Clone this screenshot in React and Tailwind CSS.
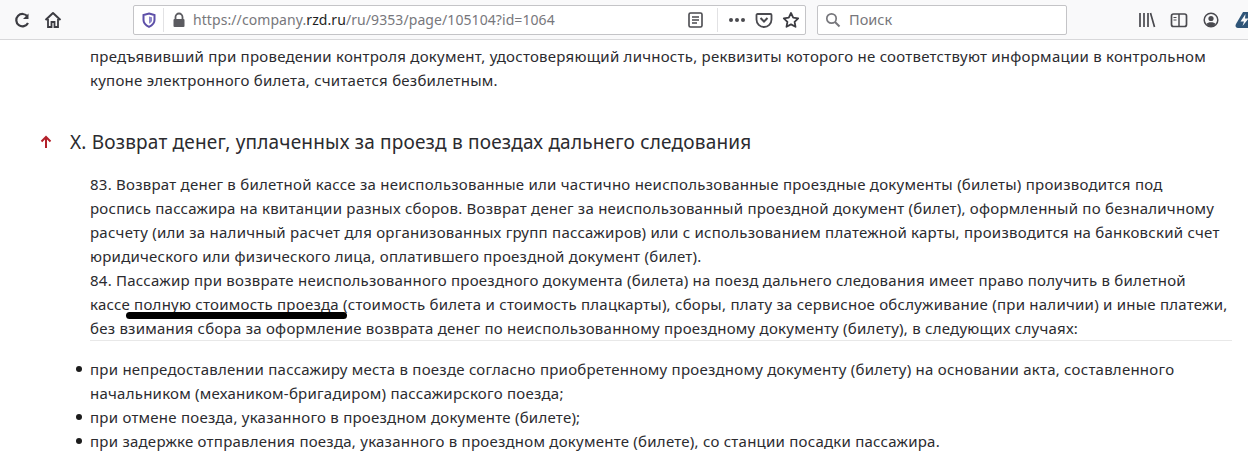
import React from "react";

const font = { fontFamily: '"Noto Sans", "Open Sans", sans-serif' };

function Line({ children }) {
  return <span className="block whitespace-nowrap">{children}</span>;
}

function Icon({ className, children, w = 18, h = 18 }) {
  return (
    <svg width={w} height={h} viewBox={`0 0 ${w} ${h}`} fill="none" className={className}>
      {children}
    </svg>
  );
}

function Toolbar() {
  return (
    <div className="h-10 shrink-0 bg-[#f9f9fa] border-b border-[#d8d8da] flex items-center overflow-hidden">
      <div className="w-[133px] shrink-0 flex items-center pl-[13px] gap-[13px]">
        <Icon>
          <path d="M14.500 5.500A6.200 6.200 0 1 0 15 12" stroke="#3c3c42" strokeWidth="2.200" />
          <path d="M15.500 2.500v5.500h-5.500z" fill="#3c3c42" />
        </Icon>
        <Icon>
          <path d="M1.500 9 9 2l7.500 7" stroke="#3c3c42" strokeWidth="2" strokeLinejoin="round" />
          <path d="M4 8v8h3.500v-5h3v5H14V8" stroke="#3c3c42" strokeWidth="1.800" />
        </Icon>
      </div>
      <div className="h-[30px] w-[673px] shrink-0 bg-white border border-[#c4c4c7] rounded-[2px] flex items-center">
        <div className="w-[29px] flex justify-center shrink-0">
          <Icon w={14} h={16}>
            <path d="M7 1.500 12.500 3v5c0 3.500-2.500 5.500-5.500 6.800C4 13.500 1.500 11.500 1.500 8V3z" stroke="#5d4fa8" strokeWidth="2" />
            <path d="M7 4.500 10 5.300v3c0 1.700-1.300 2.700-3 3.500z" fill="#8d86c9" />
          </Icon>
        </div>
        <div className="w-px h-[24px] bg-[#e2e2e4] shrink-0" />
        <div className="w-[29px] flex justify-center shrink-0">
          <Icon w={14} h={16}>
            <path d="M3.500 7V5a3.500 3.500 0 0 1 7 0v2" stroke="#5b5b60" strokeWidth="1.800" />
            <rect x="1.500" y="7" width="11" height="8" rx="1" fill="#5b5b60" />
          </Icon>
        </div>
        <div className="text-[14px] text-[#77777c] whitespace-nowrap tracking-[0.08px]" style={font}>
          https://company.<span className="text-[#1e1e22]">rzd.ru</span>/ru/9353/page/105104?id=1064
        </div>
        <div className="ml-auto flex items-center">
          <Icon w={16} h={18} className="mr-[13px]">
            <rect x="1" y="2" width="13" height="14" rx="1.500" stroke="#4a4a4f" strokeWidth="1.600" />
            <path d="M4 6h7M4 9h7M4 12h5" stroke="#4a4a4f" strokeWidth="1.300" />
          </Icon>
          <div className="w-px h-[24px] bg-[#e2e2e4] mr-[11px]" />
          <div className="flex gap-[2px] mr-[10px]">
            <span className="w-1 h-1 rounded-full bg-[#4a4a4f]" />
            <span className="w-1 h-1 rounded-full bg-[#4a4a4f]" />
            <span className="w-1 h-1 rounded-full bg-[#4a4a4f]" />
          </div>
          <Icon className="mr-[9px]">
            <path d="M2.500 3h13a1 1 0 0 1 1 1v4.500a7.500 7.500 0 0 1-15 0V4a1 1 0 0 1 1-1z" stroke="#4a4a4f" strokeWidth="1.800" />
            <path d="m5.500 7 3.500 3.500L12.500 7" stroke="#4a4a4f" strokeWidth="2" />
          </Icon>
          <Icon className="mr-[5px]">
            <path d="m9 2 2.200 4.600 5 .700-3.600 3.500.900 5L9 13.400 4.500 15.800l.900-5L1.800 7.300l5-.700z" stroke="#3c3c42" strokeWidth="1.800" strokeLinejoin="round" />
          </Icon>
        </div>
      </div>
      <div className="w-[11px] shrink-0" />
      <div className="h-[30px] w-[250px] shrink-0 bg-white border border-[#c4c4c7] rounded-[2px] flex items-center pl-[7px] gap-[8px]">
        <Icon w={16} h={16}>
          <circle cx="6.500" cy="6.500" r="4.700" stroke="#77777c" strokeWidth="1.700" />
          <path d="m10 10 4.500 4.500" stroke="#77777c" strokeWidth="2" />
        </Icon>
        <span className="text-[14.5px] text-[#77777c]" style={font}>Поиск</span>
      </div>
      <div className="flex items-center ml-[71px] shrink-0">
        <Icon className="mr-[14px]">
          <path d="M2 2v14M6 2v14M10 2v14M12.500 2l4 14" stroke="#4a4a4f" strokeWidth="1.700" />
        </Icon>
        <Icon className="mr-[14px]">
          <rect x="1.500" y="3" width="15" height="12.500" rx="2" stroke="#4a4a4f" strokeWidth="1.700" />
          <path d="M9 3v12.500" stroke="#4a4a4f" strokeWidth="1.500" />
          <path d="M3.500 6.500h3M3.500 9h3" stroke="#4a4a4f" strokeWidth="1.200" />
        </Icon>
        <Icon className="mr-[15px]">
          <circle cx="9" cy="9" r="6.800" stroke="#4a4a4f" strokeWidth="1.500" />
          <circle cx="9" cy="7.500" r="2.600" fill="#4a4a4f" />
          <path d="M4.500 13c1-2.500 8-2.500 9 0l-2 2h-5z" fill="#4a4a4f" />
        </Icon>
        <Icon w={15} h={16} className="shrink-0">
          <path d="M8 0h7v16H3C.500 16 0 14 1 12z" fill="#2f5578" />
          <path d="M10.500 2 5.500 9.500H9L7.500 14l6-7.500H10z" fill="#f9f9fa" />
        </Icon>
      </div>
    </div>
  );
}

export default function App() {
  return (
    <div className="w-[1248px] h-[453px] overflow-hidden bg-white flex flex-col text-[#2b2b2f]" style={font}>
      <Toolbar />
      <main className="relative flex-1 overflow-hidden text-[15px] tracking-[0.24px] leading-6">
        <p className="pl-[90px] pt-[4px]">
          <Line>предъявивший при проведении контроля документ, удостоверяющий личность, реквизиты которого не соответствуют информации в контрольном</Line>
          <Line>купоне электронного билета, считается безбилетным.</Line>
        </p>
        <div className="flex items-center mt-[38px] h-6">
          <svg width="12" height="14" viewBox="0 0 12 14" fill="none" className="ml-[40px] mr-[18px]">
            <path d="M6 13V2M1.500 6.500 6 2l4.500 4.500" stroke="#b3202a" strokeWidth="2" />
          </svg>
          <h2 className="text-[19px] tracking-[0.19px] whitespace-nowrap">X. Возврат денег, уплаченных за проезд в поездах дальнего следования</h2>
        </div>
        <div className="relative ml-[90px] w-[1142px] mt-[18px] border-b border-[#e8e8e8]">
          <p>
            <Line>83. Возврат денег в билетной кассе за неиспользованные или частично неиспользованные проездные документы (билеты) производится под</Line>
            <Line>роспись пассажира на квитанции разных сборов. Возврат денег за неиспользованный проездной документ (билет), оформленный по безналичному</Line>
            <Line>расчету (или за наличный расчет для организованных групп пассажиров) или с использованием платежной карты, производится на банковский счет</Line>
            <Line>юридического или физического лица, оплатившего проездной документ (билет).</Line>
            <Line>84. Пассажир при возврате неиспользованного проездного документа (билета) на поезд дальнего следования имеет право получить в билетной</Line>
            <Line>кассе полную стоимость проезда (стоимость билета и стоимость плацкарты), сборы, плату за сервисное обслуживание (при наличии) и иные платежи,</Line>
            <Line>без взимания сбора за оформление возврата денег по неиспользованному проездному документу (билету), в следующих случаях:</Line>
          </p>
          <div className="absolute left-[36px] top-[140px] w-[221px] h-[7px] rounded-full bg-black" />
        </div>
        <ul className="mt-[16px]">
          {[
            ["при непредоставлении пассажиру места в поезде согласно приобретенному проездному документу (билету) на основании акта, составленного", "начальником (механиком-бригадиром) пассажирского поезда;"],
            ["при отмене поезда, указанного в проездном документе (билете);"],
            ["при задержке отправления поезда, указанного в проездном документе (билете), со станции посадки пассажира."],
          ].map((lines) => (
            <li key={lines[0]} className="relative pl-[90px]">
              <span className="absolute left-[76px] top-[9px] w-[6px] h-[6px] rounded-full bg-[#1c1c1c]" />
              {lines.map((l) => (
                <Line key={l}>{l}</Line>
              ))}
            </li>
          ))}
        </ul>
      </main>
    </div>
  );
}
